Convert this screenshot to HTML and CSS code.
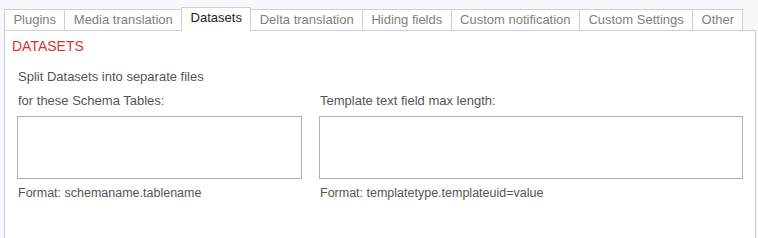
FILE: index.html
```html
<!DOCTYPE html>
<html lang="en">
  <head>
    <meta charset="UTF-8" />
    <title>Datasets</title>
    <link rel="stylesheet" href="styles.css">
  </head>
  <body>
    <div class="settings">
      <ul class="tabs">
        <li class="tab">Plugins</li>
        <li class="tab">Media translation</li>
        <li class="tab active">Datasets</li>
        <li class="tab">Delta translation</li>
        <li class="tab">Hiding fields</li>
        <li class="tab">Custom notification</li>
        <li class="tab">Custom Settings</li>
        <li class="tab">Other</li>
      </ul>

      <div class="panel">
        <h2 class="panel-title">DATASETS</h2>

        <div class="fields">
          <div class="field">
            <label>Split Datasets into separate files<br>for these Schema Tables:</label>
            <textarea></textarea>
            <p class="hint">Format: schemaname.tablename</p>
          </div>
          <div class="field">
            <label><br>Template text field max length:</label>
            <textarea></textarea>
            <p class="hint">Format: templatetype.templateuid=value</p>
          </div>
        </div>
      </div>
    </div>
  </body>
</html>
```

FILE: styles.css
```css
* {
  margin: 0;
  padding: 0;
  box-sizing: border-box;
}

body {
  font-family: "Liberation Sans", Arial, sans-serif;
  font-size: 13px;
  background: #f7f7fc;
  color: #555;
}

.settings {
  padding: 7px 2px 0 4px;
}

.tabs {
  list-style: none;
  display: flex;
  align-items: flex-end;
}

.tab {
  position: relative;
  height: 21px;
  line-height: 20px;
  padding: 0 8.4px;
  margin-right: -1px;
  background: #fff;
  border: 1px solid #d0d0d4;
  border-bottom: none;
  color: #808080;
  white-space: nowrap;
}

.tab.active {
  height: 24px;
  padding-bottom: 3px;
  margin-bottom: -1px;
  z-index: 1;
  color: #222;
}

.panel {
  height: 230px;
  background: #fff;
  border: 1px solid #cdcdd6;
  padding: 6px 12px 0;
}

.panel-title {
  font-size: 14px;
  font-weight: normal;
  line-height: 18px;
  color: #d9332b;
  margin-left: -5px;
}

.fields {
  display: grid;
  grid-template-columns: 285px 1fr;
  column-gap: 17px;
  margin-top: 10px;
}

.field label {
  display: block;
  line-height: 24px;
  padding-left: 1px;
}

.field textarea {
  display: block;
  width: 100%;
  height: 63px;
  margin-top: 3px;
  border: 1px solid #aeaebc;
  resize: none;
  font: inherit;
}

.hint {
  font-size: 12.5px;
  line-height: 24px;
  padding: 2px 0 0 1px;
}
```
